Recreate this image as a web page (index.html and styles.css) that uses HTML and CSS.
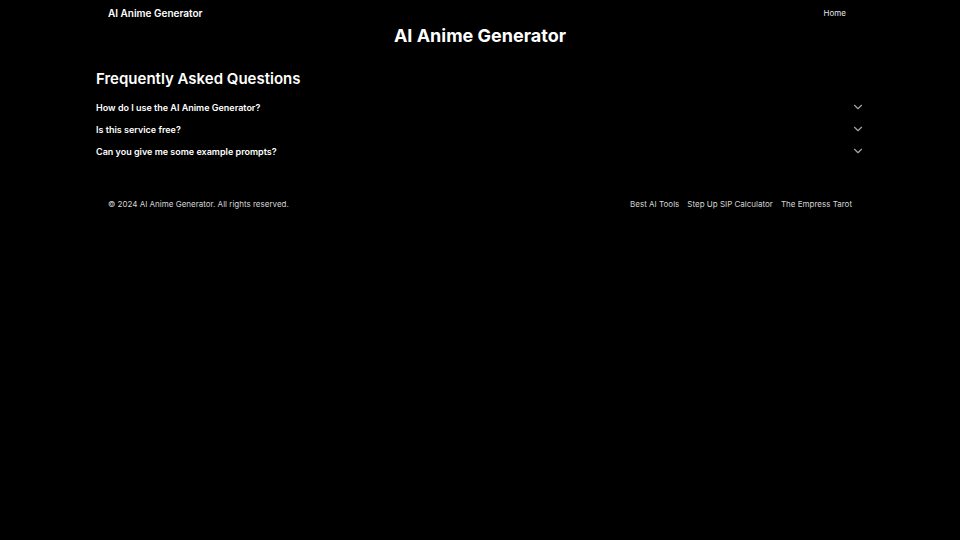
FILE: index.html
```html
<!DOCTYPE html>
<html lang="en">
<head>
<meta charset="utf-8">
<title>AI Anime Generator</title>
<link rel="stylesheet" href="styles.css">
</head>
<body>
<div class="page">
  <header class="header">
    <div class="logo">AI Anime Generator</div>
    <nav class="nav"><a href="#">Home</a></nav>
  </header>
  <main class="main">
    <h1 class="title">AI Anime Generator</h1>
    <section class="faq">
      <h2 class="faq-title">Frequently Asked Questions</h2>
      <div class="faq-item">
        <span>How do I use the AI Anime Generator?</span>
        <svg class="chev" viewBox="0 0 24 24" width="14" height="14"><path d="M6 9l6 6 6-6" fill="none" stroke="currentColor" stroke-width="2" stroke-linecap="round" stroke-linejoin="round"/></svg>
      </div>
      <div class="faq-item">
        <span>Is this service free?</span>
        <svg class="chev" viewBox="0 0 24 24" width="14" height="14"><path d="M6 9l6 6 6-6" fill="none" stroke="currentColor" stroke-width="2" stroke-linecap="round" stroke-linejoin="round"/></svg>
      </div>
      <div class="faq-item">
        <span>Can you give me some example prompts?</span>
        <svg class="chev" viewBox="0 0 24 24" width="14" height="14"><path d="M6 9l6 6 6-6" fill="none" stroke="currentColor" stroke-width="2" stroke-linecap="round" stroke-linejoin="round"/></svg>
      </div>
    </section>
  </main>
  <footer class="footer">
    <div class="copy">© 2024 AI Anime Generator. All rights reserved.</div>
    <nav class="links">
      <a href="#">Best AI Tools</a>
      <a href="#">Step Up SIP Calculator</a>
      <a href="#">The Empress Tarot</a>
    </nav>
  </footer>
</div>
</body>
</html>
```
FILE: styles.css
```css
html, body {
  margin: 0;
  padding: 0;
  background: #000;
  color: #fff;
  font-family: Inter, "Noto Sans", sans-serif;
}
a { color: inherit; text-decoration: none; }
.page {
  width: 768px;
  margin: 0 auto;
}
.header {
  display: flex;
  justify-content: space-between;
  align-items: center;
  padding: 0 12px;
  height: 26px;
}
.logo {
  font-size: 10px;
  font-weight: 600;
}
.nav {
  font-size: 8px;
  color: #e5e5e5;
  padding-right: 6px;
}
.title {
  margin: -2px 0 0 0;
  text-align: center;
  font-size: 18px;
  font-weight: 700;
  line-height: 24px;
}
.faq {
  margin-top: 21px;
}
.faq-title {
  margin: 0 0 7px 0;
  font-size: 15px;
  font-weight: 600;
  line-height: 20px;
}
.faq-item {
  display: flex;
  justify-content: space-between;
  align-items: center;
  height: 22px;
  font-size: 9px;
  font-weight: 600;
}
.chev {
  color: #a3a3a3;
  margin-right: -1px;
}
.footer {
  display: flex;
  justify-content: space-between;
  align-items: center;
  padding: 0 12px;
  margin-top: 36px;
  height: 12px;
  font-size: 8px;
  color: #d4d4d4;
}
.links {
  display: flex;
  gap: 8px;
}
```
